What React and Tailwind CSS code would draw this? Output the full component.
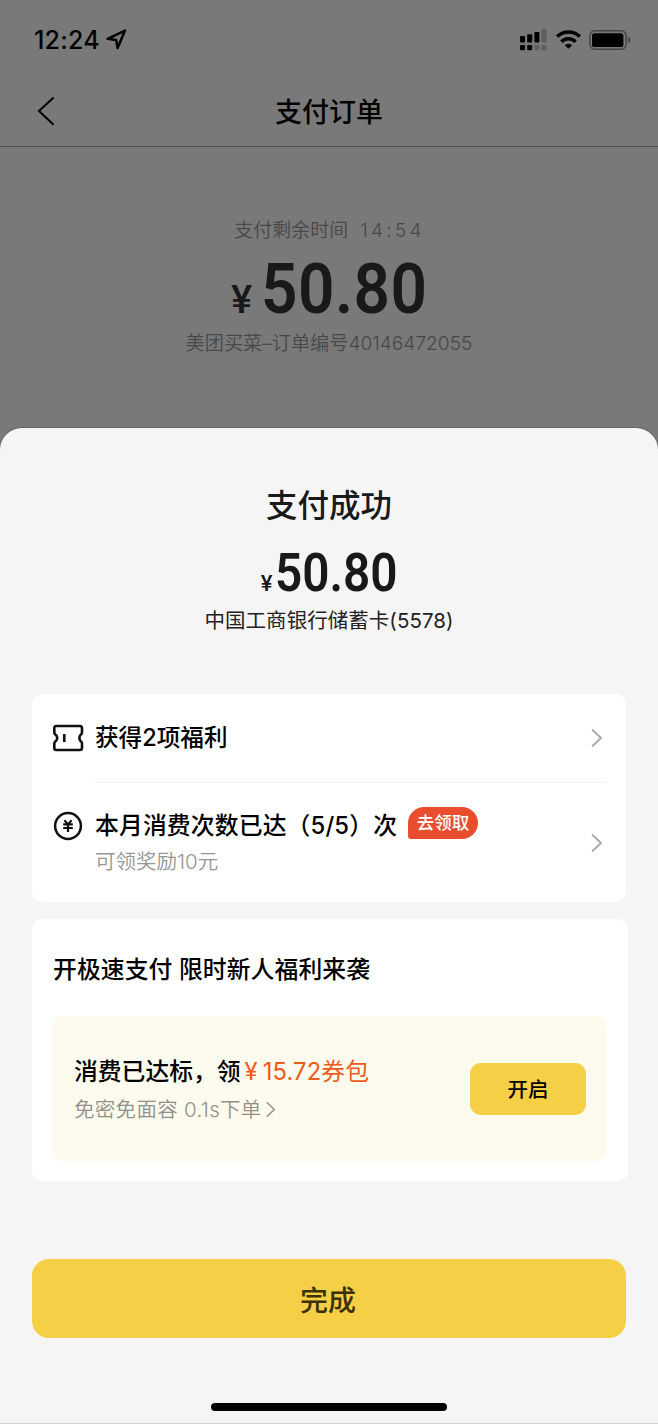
import React from 'react';

function Chevron({ className }) {
  return (
    <svg className={className} viewBox="0 0 12 20" fill="none" stroke="currentColor" strokeWidth="1.8" strokeLinecap="round" strokeLinejoin="round">
      <path d="M1.5 2 L10 10 L1.5 18" />
    </svg>
  );
}

function StatusBar() {
  return (
    <div className="flex h-[79px] items-center justify-between pl-[34px] pr-[27px]">
      <div className="flex items-center gap-[6px]">
        <span className="text-[25px] leading-[30px] font-[550] tracking-[0.2px]">12:24</span>
        <svg className="h-[21px] w-[21px]" viewBox="0 0 21 21" fill="none" stroke="#000" strokeWidth="2.5" strokeLinejoin="round">
          <path d="M1.6 9.8 L19 1.6 L11.6 19 L10.2 11 Z" />
        </svg>
      </div>
      <div className="flex items-center">
        <svg className="mr-[9px] h-[22px] w-[27px]" viewBox="0 0 27 22">
          <rect x="0" y="7" width="5" height="6.5" rx="1" />
          <rect x="7.2" y="5.2" width="5" height="8.3" rx="1" />
          <rect x="14.4" y="3" width="5" height="10.5" rx="1" />
          <rect x="21.6" y="0.2" width="5" height="13.3" rx="1.4" fill="#5e5e5e" />
          <rect x="0" y="16" width="5" height="5.2" rx="1.2" />
          <rect x="7.2" y="16" width="5" height="5.2" rx="1.2" />
          <rect x="14.4" y="16" width="5" height="5.2" rx="1.2" fill="#5e5e5e" />
          <rect x="21.6" y="16" width="5" height="5.2" rx="1.2" fill="#5e5e5e" />
        </svg>
        <svg className="mr-[8px] h-[19px] w-[25px]" viewBox="0 0 25 19" fill="none" stroke="#000" strokeWidth="3.6">
          <path d="M1.2 6.6 A16 16 0 0 1 23.8 6.6" />
          <path d="M5.5 11.8 A9.7 9.7 0 0 1 19.5 11.8" />
          <path d="M8.8 15.2 A5.2 5.2 0 0 1 16.2 15.2 L12.5 18.8 Z" fill="#000" stroke="none" />
        </svg>
        <svg className="h-[20px] w-[42px]" viewBox="0 0 42 20">
          <rect x="0.8" y="0.8" width="36.4" height="18.4" rx="5" fill="none" stroke="#444" strokeWidth="1.4" />
          <rect x="3" y="3.2" width="31.4" height="13.8" rx="2.6" />
          <path d="M39.3 6.8 Q41.5 8 41.5 10 Q41.5 12 39.3 13.2 Z" fill="#444" />
        </svg>
      </div>
    </div>
  );
}

function PaymentPage() {
  return (
    <div className="h-[428px] bg-[#797979]">
      <StatusBar />
      <div className="grid h-[68px] grid-cols-[1fr_auto_1fr] items-center border-b border-[#4f4f4f] pb-[3px]">
        <svg className="ml-[37px] h-[30px] w-[19px]" viewBox="0 0 19 30" fill="none" stroke="#000" strokeWidth="2">
          <path d="M16.6 1.4 L2 15 L16.6 28.8" />
        </svg>
        <h1 className="pt-[4px] text-[27px] leading-[40px] font-medium">支付订单</h1>
      </div>
      <div className="flex flex-col items-center pt-[69px]">
        <p className="flex h-[30px] items-center gap-[12px] pl-[1px] text-[19px] leading-[30px] font-[350] text-[#484848]">
          <span>支付剩余时间</span>
          <span className="tracking-[3.3px]">14:54</span>
        </p>
        <div className="flex h-[82px] items-baseline pt-[1px] font-[Roboto] text-[#191919]">
          <span className="mr-[8px] w-[22px] origin-left scale-x-105 text-[38px] font-medium">¥</span>
          <span className="w-[166px] origin-left scale-x-90 text-[71px] leading-[83px] font-semibold tracking-[0.5px]">50.80</span>
        </div>
        <p className="text-[19.2px] leading-[30px] font-[350] tracking-[-0.03px] text-[#484848]">美团买菜–订单编号40146472055</p>
      </div>
    </div>
  );
}

function BenefitsCard() {
  return (
    <section className="h-[208px] w-[594px] rounded-[10px] bg-white pl-[21px] pr-[20px]">
      <div className="flex h-[88px] items-center">
        <svg className="h-[28px] w-[32px]" viewBox="0 0 32 28" fill="none" stroke="#111" strokeWidth="2.6" strokeLinejoin="round">
          <path d="M3.2 2 H26.8 Q29 2 29 4.2 V8.6 Q29 10 27.6 10.8 Q26.4 12 26.4 14 Q26.4 16 27.6 17.2 Q29 18 29 19.4 V23.8 Q29 26 26.8 26 H3.2 Q1.3 26 1.3 23.8 V19.4 Q1.3 18 2.7 17.2 Q4.2 16 4.2 14 Q4.2 12 2.7 10.8 Q1.3 10 1.3 8.6 V4.2 Q1.3 2 3.2 2 Z" />
          <path d="M11.3 10 V18" />
        </svg>
        <h3 className="ml-[10px] flex-1 text-[23.6px] leading-[34px] font-medium">获得2项福利</h3>
        <Chevron className="mr-[3px] h-[20px] w-[12px] text-[#a9a9a9]" />
      </div>
      <div className="ml-[42px] h-px bg-[#f1f1f1]" />
      <div className="flex h-[119px] items-center">
        <svg className="mb-[34px] h-[30px] w-[30px]" viewBox="0 0 30 30" fill="none" stroke="#111" strokeWidth="2.5">
          <circle cx="15" cy="15" r="12.9" />
          <path d="M11.4 9.3 L15 13.4 L18.6 9.3 M15 13 V21 M10.2 13.4 H19.8 M10.2 17 H19.8" strokeWidth="2.2" />
        </svg>
        <div className="ml-[12px] flex-1 pt-[2px]">
          <div className="flex h-[34px] items-center">
            <h3 className="pt-[1px] text-[23.8px] leading-[34px] font-medium tracking-[0.15px] whitespace-nowrap">本月消费次数已达（5/5）次</h3>
            <span className="mb-[5px] ml-[11px] flex h-[32px] w-[70px] items-center justify-center rounded-[16px] rounded-bl-[3px] bg-[#e84d2d] pt-[2px] text-[17.5px] font-medium text-white">去领取</span>
          </div>
          <p className="mt-[3px] text-[20.5px] leading-[34px] font-[350] text-[#969696]">可领奖励10元</p>
        </div>
        <Chevron className="mr-[3px] h-[20px] w-[12px] text-[#a9a9a9]" />
      </div>
    </section>
  );
}

function QuickPayCard() {
  return (
    <section className="mt-[17px] h-[262px] w-[596px] rounded-[10px] bg-white pr-[21px] pl-[20px] pt-[34px]">
      <h3 className="pl-[1px] text-[23.8px] leading-[34px] font-medium tracking-[0.1px]">开极速支付 限时新人福利来袭</h3>
      <div className="mt-[29px] flex h-[145px] items-center justify-between rounded-[10px] bg-[#fdfbee] px-[21px]">
        <div className="pt-[4px] pl-[1px]">
          <p className="flex text-[23.8px] leading-[36px] font-medium">
            消费已达标，领<span className="ml-[4px] font-normal tracking-[0.1px] text-[#ee5b19]"><span className="mr-[5px]">¥</span>15.72券包</span>
          </p>
          <p className="mt-[2px] flex items-center text-[20.5px] leading-[36px] font-[350] tracking-[0.3px] text-[#91908a]">
            免密免面容 0.1s下单
            <Chevron className="ml-[3px] h-[17px] w-[12px]" />
          </p>
        </div>
        <button className="h-[52px] w-[116px] rounded-[11px] bg-[#f5cf46] pt-[3px] text-[20.5px] font-medium">开启</button>
      </div>
    </section>
  );
}

export default function App() {
  return (
    <main className="h-[1424px] w-[658px] overflow-hidden bg-[#797979] font-[Inter,'Noto_Sans_CJK_SC',sans-serif] text-black">
      <PaymentPage />
      <div className="flex h-[996px] flex-col rounded-t-[22px] border-b border-[#d0d0d0] bg-[#f5f5f5] px-[32px] pt-[54px] shadow-[0_-1px_1px_#666]">
        <div className="flex flex-col items-center">
          <h2 className="text-[31.5px] leading-[48px] font-medium text-[#191919]">支付成功</h2>
          <div className="mt-[13px] flex h-[62px] items-baseline font-[Roboto] text-[#191919]">
            <span className="mr-[3px] text-[22px] font-medium">¥</span>
            <span className="w-[122px] origin-left scale-x-90 text-[53px] leading-[60px] font-semibold tracking-[0px]">50.80</span>
          </div>
          <p className="text-[20.5px] leading-[32px] tracking-[0.04px] text-[#222]">中国工商银行储蓄卡(5578)</p>
        </div>
        <div className="mt-[57px]">
          <BenefitsCard />
          <QuickPayCard />
        </div>
        <button className="mt-[78px] h-[79px] w-[594px] shrink-0 rounded-[17px] bg-[#f5cf46] pt-[4px] pr-[2px] text-[28px] font-medium text-[#3b310a]">完成</button>
        <div className="mx-auto mt-[65px] h-[8px] w-[236px] rounded-full bg-black" />
      </div>
    </main>
  );
}
